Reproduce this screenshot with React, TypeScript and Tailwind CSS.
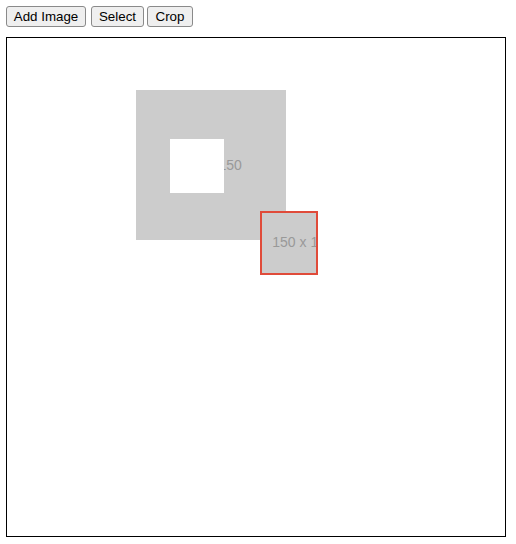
import React from 'react';

const BUTTON = 'h-[21px] rounded-[3px] border border-[#8a8a8a] bg-[#efefef] text-[13.33px] leading-none text-black';

function Placeholder() {
  return (
    <div className="flex h-[150px] w-[150px] items-center justify-center bg-[#cccccc] text-[14px] text-[#999999]">
      150 x 150
    </div>
  );
}

export default function App() {
  return (
    <div className="p-[6px] font-['Liberation_Sans',Arial,sans-serif]">
      <div className="flex">
        <button className={`${BUTTON} w-[80px]`}>Add Image</button>
        <button className={`${BUTTON} ml-[5px] w-[53px]`}>Select</button>
        <button className={`${BUTTON} ml-[3px] w-[46px]`}>Crop</button>
      </div>

      {/* canvas */}
      <div className="relative mt-[10px] h-[500px] w-[500px] border border-black bg-white">
        <div className="absolute left-[129px] top-[52px]">
          <Placeholder />
          {/* selected area cut out */}
          <div className="absolute left-[34px] top-[49px] h-[54px] w-[54px] bg-white" />
        </div>

        {/* crop preview */}
        <div className="absolute left-[253px] top-[173px] h-[64px] w-[58px] overflow-hidden border-2 border-[#e04b3a]">
          <div className="absolute left-[-34px] top-[-46px]">
            <Placeholder />
          </div>
        </div>
      </div>
    </div>
  );
}
